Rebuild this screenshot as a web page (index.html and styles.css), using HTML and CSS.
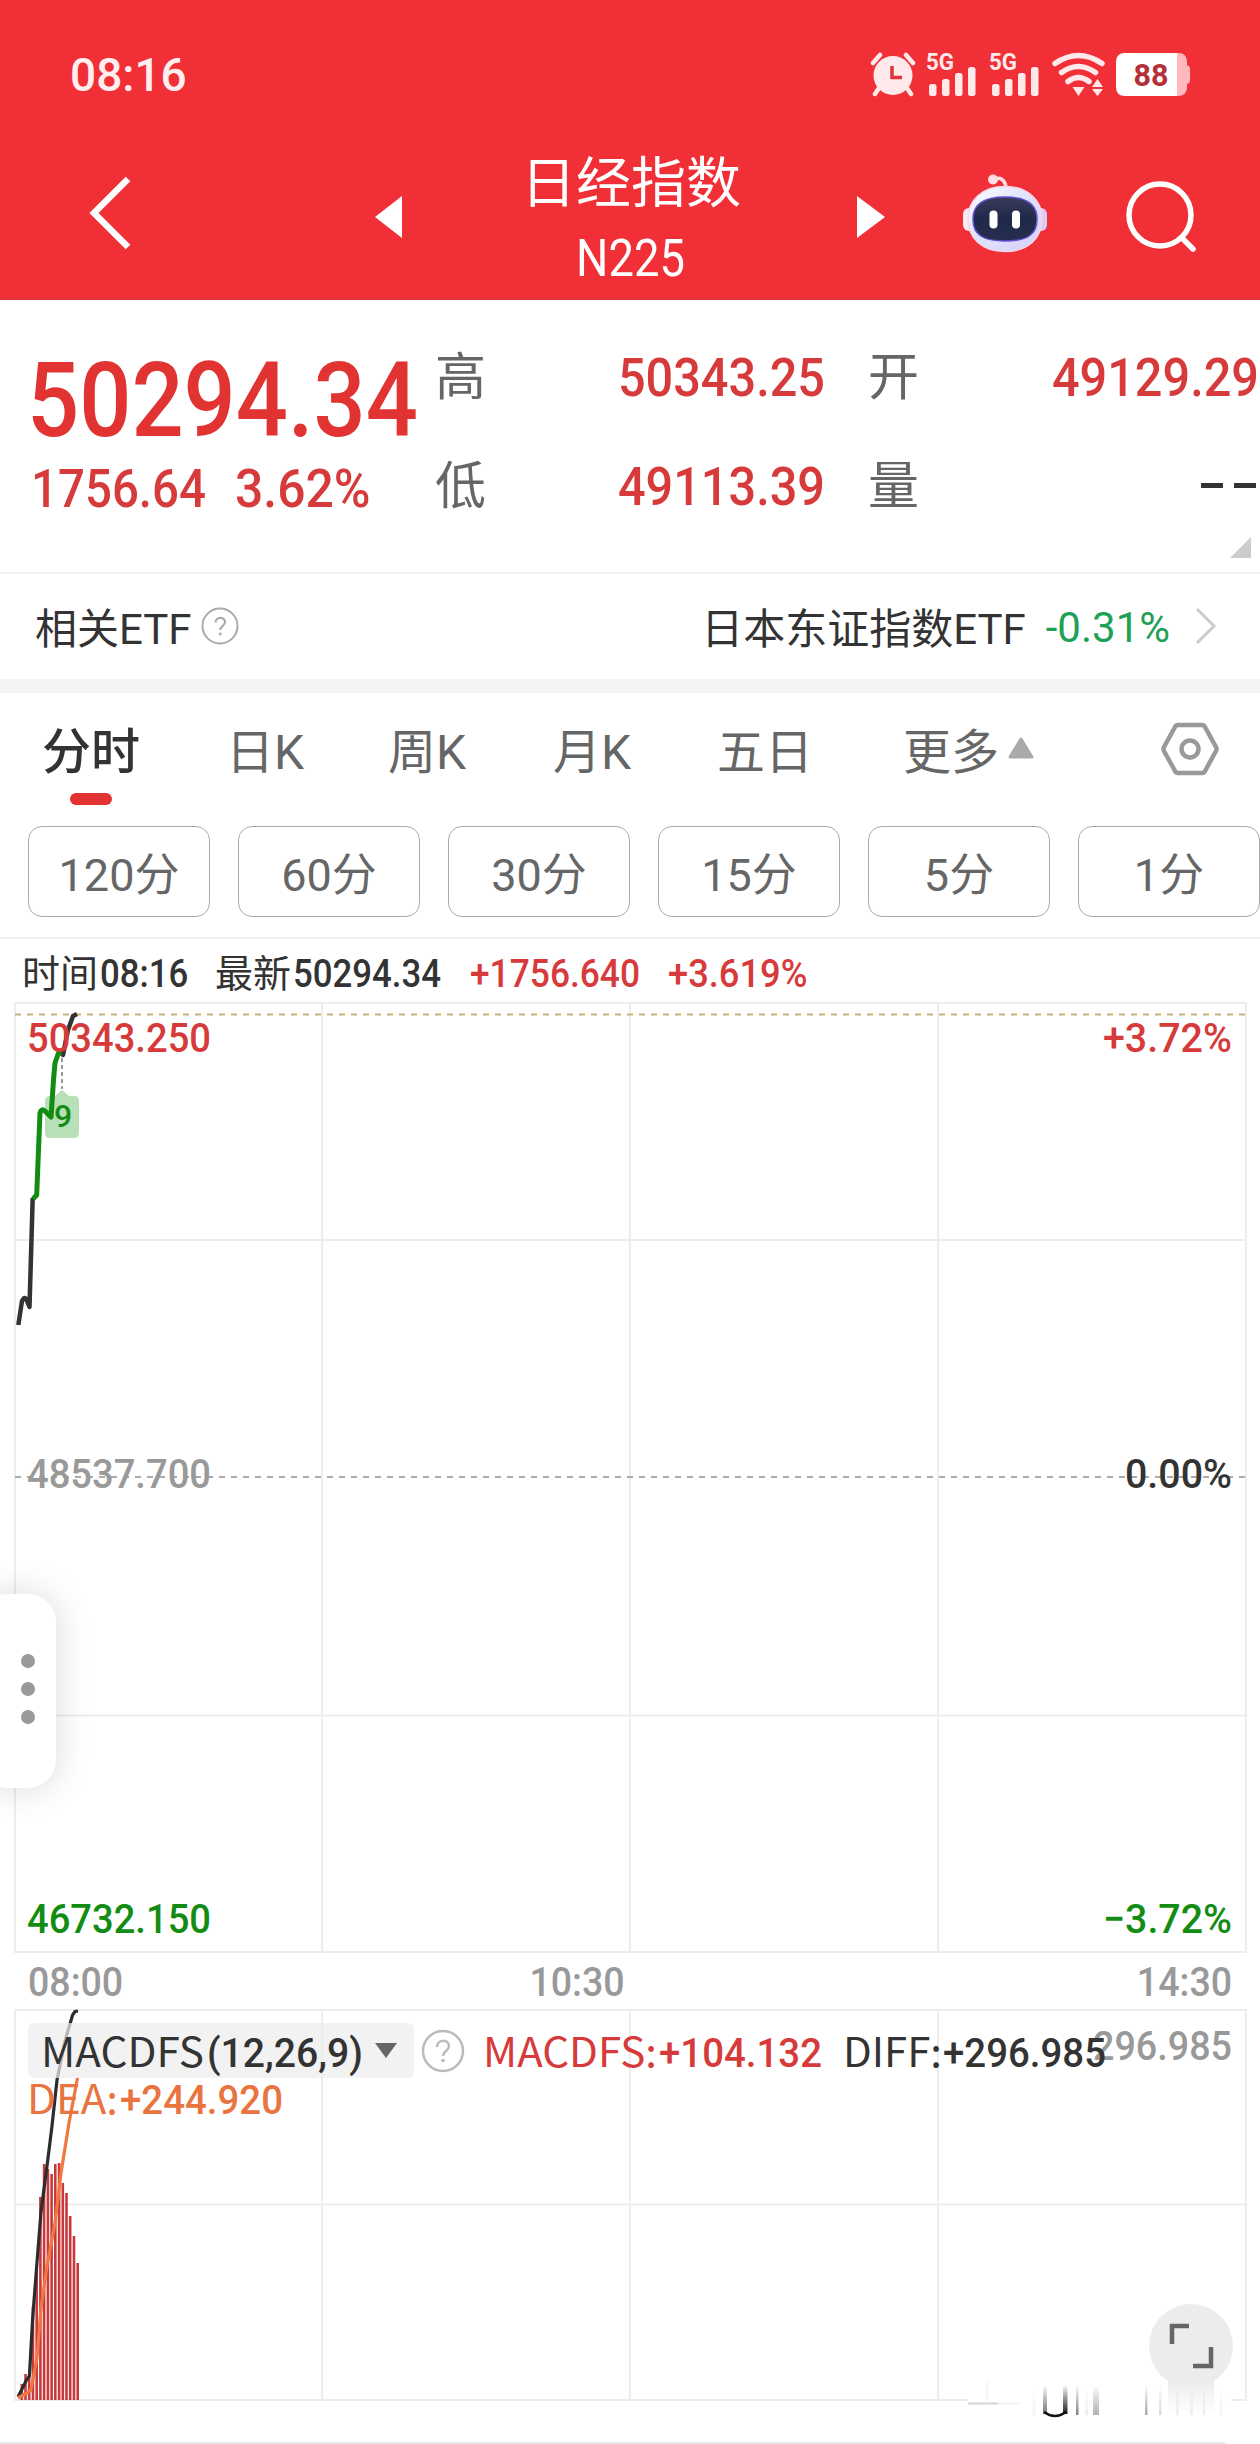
FILE: index.html
```html
<!DOCTYPE html>
<html lang="zh-CN">
<head>
<meta charset="utf-8">
<title>日经指数 N225</title>
<link rel="stylesheet" href="styles.css">
</head>
<body>
<div class="app">
  <header class="header">
    <div class="status">
      <span class="clock">08:16</span>
      <svg class="status-icons" width="322" height="48" viewBox="870 51 322 48">
        <g fill="#ffe9ea">
          <circle cx="893" cy="75.500" r="19.500"/>
          <path d="M873 63l7-8M913 63l-7-8M879 88l-4 6M907 88l4 6" stroke="#ffe9ea" stroke-width="4.500" stroke-linecap="round" fill="none"/>
          <path d="M892 66v11.500h10" stroke="#e0333a" stroke-width="3.500" fill="none"/>
          <text x="926" y="70" class="net" textLength="28" lengthAdjust="spacingAndGlyphs">5G</text>
          <text x="989" y="70" class="net" textLength="28" lengthAdjust="spacingAndGlyphs">5G</text>
          <g id="bars">
            <rect x="929" y="84" width="7.500" height="12" rx="2.500"/>
            <rect x="942" y="79" width="7.500" height="17" rx="2.500"/>
            <rect x="955" y="73" width="7.500" height="23" rx="2.500"/>
            <rect x="968" y="67" width="7.500" height="29" rx="2.500"/>
          </g>
          <use href="#bars" x="63"/>
          <path d="M1055 63.500q23.500-16 47 0M1061.500 72.500q17-12 34 0M1068 81.500q10.500-8 21 0" fill="none" stroke="#ffe9ea" stroke-width="5.500" stroke-linecap="round"/>
          <path d="M1072.500 87h12l-6 9zM1092 87l5.500-8 5.500 8zM1092 89h11l-5.500 7z"/>
        </g>
        <path d="M1176 53h2q9 0 9 9v3q3 1 3 4v11q0 3-3 4v3q0 9-9 9h-2z" fill="#ffb9bd"/>
        <path d="M1177 53h-52q-9 0-9 9v25q0 9 9 9h52z" fill="#fff"/>
        <text x="1133.500" y="86" class="battery" textLength="35" lengthAdjust="spacingAndGlyphs">88</text>
      </svg>
    </div>
    <nav class="nav">
      <svg class="back" width="44" height="80" viewBox="0 0 44 80"><path d="M39 6L5 40l34 34" fill="none" stroke="#fff" stroke-width="6.500"/></svg>
      <svg class="prev" width="27" height="42" viewBox="0 0 27 42"><path d="M27 0v42L0 21z" fill="#fff"/></svg>
      <div class="title">
        <h1>日经指数</h1>
        <span class="code">N225</span>
      </div>
      <svg class="next" width="28" height="42" viewBox="0 0 28 42"><path d="M0 0v42l28-21z" fill="#fff"/></svg>
      <svg class="robot" width="84" height="80" viewBox="963 173 84 80">
        <defs>
          <linearGradient id="shell" x1="0" y1="0" x2="1" y2="1"><stop offset="0" stop-color="#fff"/><stop offset=".45" stop-color="#dfe4fb"/><stop offset="1" stop-color="#d7cdfb"/></linearGradient>
          <linearGradient id="face" x1="0" y1="0" x2="0" y2="1"><stop offset="0" stop-color="#393c5b"/><stop offset=".5" stop-color="#20294a"/><stop offset="1" stop-color="#252e4e"/></linearGradient>
        </defs>
        <path d="M994 179q10-3 12 8" fill="none" stroke="#ffdfe7" stroke-width="3.500"/>
        <circle cx="993" cy="179.500" r="5" fill="#ffdce5"/>
        <rect x="963" y="208" width="14" height="23" rx="6" fill="#fbe9f2"/>
        <rect x="1033" y="208" width="14" height="23" rx="6" fill="#dcc8f4"/>
        <path d="M1005 186.500c23 0 37 14 37 32 0 20-14 33-37 33s-37-13-37-33c0-18 14-32 37-32z" fill="url(#shell)" stroke="#f7d5e6" stroke-width="1.500"/>
        <path d="M1005 197c21 0 32 7 32 22 0 16-10 22-32 22s-32-6-32-22c0-15 11-22 32-22z" fill="url(#face)" stroke="#6050cc" stroke-width="1.500"/>
        <rect x="989.500" y="210.500" width="8" height="18" rx="4" fill="#fff"/>
        <rect x="1012" y="210.500" width="8" height="18" rx="4" fill="#fff"/>
      </svg>
      <svg class="search" width="72" height="74" viewBox="0 0 72 74"><circle cx="34" cy="35" r="31" fill="none" stroke="#fff" stroke-width="5.500"/><path d="M56 58l11 11" stroke="#fff" stroke-width="5.500" stroke-linecap="round"/></svg>
    </nav>
  </header>

  <section class="quote">
    <div class="last">
      <div class="price"><span>50294.34</span></div>
      <div class="change"><span>1756.64</span><span>3.62%</span></div>
    </div>
    <dl class="stats">
      <dt>高</dt><dd class="up">50343.25</dd><dt>开</dt><dd class="up">49129.29</dd>
      <dt>低</dt><dd class="up">49113.39</dd><dt>量</dt><dd class="empty"><i></i><i></i></dd>
    </dl>
    <svg class="corner" width="21" height="21" viewBox="0 0 21 21"><path d="M21 0v21H0z" fill="#ccc"/></svg>
  </section>

  <section class="etf">
    <span>相关ETF</span>
    <svg class="help" width="38" height="38" viewBox="0 0 38 38"><circle cx="19" cy="19" r="17.500" fill="none" stroke="#aaa" stroke-width="2"/><path d="M14.500 15.500c0-6 9.500-6 9.500-.5 0 4-4.800 4-4.800 8" fill="none" stroke="#aaa" stroke-width="2.200"/><circle cx="19.200" cy="27" r="1.500" fill="#aaa"/></svg>
    <span class="etf-name">日本东证指数ETF</span>
    <span class="down">-0.31%</span>
    <svg class="go" width="22" height="38" viewBox="0 0 22 38"><path d="M2 2l17 17L2 36" fill="none" stroke="#ccc" stroke-width="3"/></svg>
  </section>

  <nav class="tabs">
    <span class="active">分时</span><span>日K</span><span>周K</span><span>月K</span><span>五日</span>
    <span class="more">更多<svg width="26" height="22" viewBox="0 0 26 22"><path d="M13 2l11 18H2z" fill="#aaa" stroke="#aaa" stroke-width="3" stroke-linejoin="round"/></svg></span>
    <svg class="settings" width="58" height="56" viewBox="0 0 58 56"><path d="M17 4h24q2 0 3 2l11 20q1 2 0 4L44 50q-1 2-3 2H17q-2 0-3-2L3 30q-1-2 0-4L14 6q1-2 3-2z" fill="none" stroke="#999" stroke-width="4.500"/><circle cx="29" cy="28" r="8.500" fill="none" stroke="#999" stroke-width="4.500"/></svg>
  </nav>
  <div class="periods">
    <span>120分</span><span>60分</span><span>30分</span><span>15分</span><span>5分</span><span>1分</span>
  </div>

  <div class="info">
    <span>时间<b>08:16</b></span>
    <span>最新<b>50294.34</b></span>
    <span class="up"><b>+1756.640</b></span>
    <span class="up"><b class="pct">+3.619%</b></span>
  </div>

  <svg class="chart" width="1260" height="954" viewBox="0 1000 1260 954">
    <path class="grid" d="M15 1003H1246V1952H15zM15 1240H1246M15 1715.500H1246M322 1003V1952M630 1003V1952M938 1003V1952"/>
    <path d="M15 1014.500H1245" stroke="#c3b27e" stroke-width="2" stroke-dasharray="6 6"/>
    <path d="M15 1477H1245" stroke="#aaa" stroke-width="2" stroke-dasharray="6 6"/>
    <path d="M50 1096h5l7-6 7 6h5q5 0 5 5v32q0 5-5 5H50q-5 0-5-5v-32q0-5 5-5z" fill="#b7e0b8"/>
    <path d="M62 1058v31" stroke="#555" stroke-width="1.200" stroke-dasharray="4 3"/>
    <g fill="none" stroke-width="4.500" stroke-linejoin="round">
      <path stroke="#333" d="M18.300 1325L22 1301q3-6 5 0l2.500 6L32.700 1198M60 1052l3 3 5-25 5-14 4-2"/>
      <path stroke="#128c12" stroke-width="5" d="M33 1199l3.700-4L40 1113q1-5 5-2l6 6 2.500-37L55 1063l3.500-10 3-1"/>
    </g>
    <g class="num">
      <text x="27" y="1052" textLength="184" lengthAdjust="spacingAndGlyphs" class="f-up">50343.250</text>
      <text x="1103" y="1052" textLength="129" lengthAdjust="spacingAndGlyphs" class="f-up">+3.72%</text>
      <text x="27" y="1488" textLength="184" lengthAdjust="spacingAndGlyphs" class="f-mute">48537.700</text>
      <text x="1125" y="1488" textLength="107" lengthAdjust="spacingAndGlyphs" class="f-dark">0.00%</text>
      <text x="27" y="1933" textLength="184" lengthAdjust="spacingAndGlyphs" class="f-down">46732.150</text>
      <text x="1103" y="1933" textLength="129" lengthAdjust="spacingAndGlyphs" class="f-down">−3.72%</text>
    </g>
    <text x="54" y="1127" class="mark">9</text>
  </svg>

  <div class="axis"><span>08:00</span><span>10:30</span><span>14:30</span></div>

  <svg class="chart" width="1260" height="436" viewBox="0 2008 1260 436">
    <defs>
      <linearGradient id="fade" x1="0" y1="0" x2="0" y2="1"><stop offset="0" stop-color="#000" stop-opacity="0"/><stop offset="1" stop-color="#000"/></linearGradient>
      <linearGradient id="melt" x1="0" y1="0" x2="0" y2="1"><stop offset="0" stop-color="#ececec"/><stop offset="1" stop-color="#ececec" stop-opacity="0"/></linearGradient>
    </defs>
    <path class="grid" d="M15 2010H1246V2400H15zM15 2204.500H1246M322 2010V2400M630 2010V2400M938 2010V2400"/>
    <path class="bars" d="M21.800 2400V2384M25.500 2400V2374M29.200 2400V2376M33 2400V2306M36.700 2400V2267M40.400 2400V2197M44.100 2400V2164M47.900 2400V2169M51.600 2400V2174M55.300 2400V2164M59.100 2400V2163M62.800 2400V2183M66.500 2400V2193M70.200 2400V2216M74 2400V2236M77.700 2400V2263"/>
    <path d="M18 2397L26.500 2380 29.400 2376 32.600 2319 36.700 2266 41 2212 47 2166 52 2126 57 2080 65 2041 72.600 2015 75 2011.500 78 2011" fill="none" stroke="#2c2c2e" stroke-width="3.200"/>
    <rect x="28" y="2023" width="386" height="55" rx="6" fill="#ededed" fill-opacity=".72"/>
    <path d="M18 2398L30.600 2391 37 2358 41 2308 47 2266 55 2223 61 2173 69 2123 77.500 2078" fill="none" stroke="#f17640" stroke-width="3.200"/>
    <text class="word f-dark" x="41" y="2067" textLength="163" lengthAdjust="spacingAndGlyphs">MACDFS</text>
    <g class="num">
      <text x="207" y="2067" textLength="156" lengthAdjust="spacingAndGlyphs" class="f-dark">(12,26,9)</text>
      <text x="659" y="2067" textLength="163" lengthAdjust="spacingAndGlyphs" class="f-up">+104.132</text>
      <text x="1093" y="2060" textLength="139" lengthAdjust="spacingAndGlyphs" class="f-mute">296.985</text>
      <text x="943" y="2067" textLength="163" lengthAdjust="spacingAndGlyphs" class="f-dark">+296.985</text>
      <text x="120" y="2114" textLength="163" lengthAdjust="spacingAndGlyphs" class="f-dea">+244.920</text>
    </g>
    <path d="M375 2043h22l-11 15z" fill="#666"/>
    <circle cx="443" cy="2051" r="20" fill="none" stroke="#bbb" stroke-width="2.500"/>
    <path d="M437 2047c0-8 12-8 12-1 0 5-6 5-6 10" fill="none" stroke="#bbb" stroke-width="2.500"/><circle cx="443" cy="2060.500" r="1.800" fill="#bbb"/>
    <text class="word f-up" x="483" y="2067" textLength="174" lengthAdjust="spacingAndGlyphs">MACDFS:</text>
    <text class="word f-dark" x="843" y="2067" textLength="99" lengthAdjust="spacingAndGlyphs">DIFF:</text>
    <text class="word f-dea" x="27" y="2114" textLength="91" lengthAdjust="spacingAndGlyphs">DEA:</text>
    <circle cx="1191" cy="2346" r="42" fill="#ececec"/>
    <path d="M1172 2344v-18h17M1211 2347v19h-18" fill="none" stroke="#666" stroke-width="4.500"/>
    <rect x="968" y="2383" width="263" height="33" fill="#fff"/>
    <rect x="1168" y="2380" width="46" height="34" fill="url(#melt)"/>
    <g fill="url(#fade)">
      <rect x="1043" y="2385" width="4" height="29" opacity=".55"/>
      <rect x="1063" y="2385" width="4.500" height="29" opacity=".9"/>
      <rect x="1076" y="2385" width="2.500" height="30" opacity=".5"/>
      <rect x="1093" y="2385" width="6" height="30" opacity=".3"/>
      <rect x="1145" y="2385" width="2.500" height="30" opacity=".35"/>
      <rect x="1159" y="2385" width="2.500" height="30" opacity=".15"/>
      <rect x="1203" y="2385" width="2" height="30" opacity=".08"/>
      <rect x="1085" y="2385" width="3" height="30" opacity=".06"/>
      <rect x="1032" y="2385" width="4" height="30" opacity=".04"/>
      <rect x="1176" y="2385" width="3" height="30" opacity=".06"/>
      <rect x="1190" y="2385" width="3" height="30" opacity=".06"/>
      <rect x="1220" y="2385" width="2" height="30" opacity=".05"/>
    </g>
    <path d="M1044 2412q11 8 22 0" fill="none" stroke="#111" stroke-width="2.500"/>
    <path d="M968 2403.500h30" stroke="#d4d4d4" stroke-width="2"/><path d="M998 2403.500h22" stroke="#f0f0f0" stroke-width="2"/>
    <path d="M987 2380v22" stroke="#f8f8f8" stroke-width="3"/>
    <path d="M0 2443h1225" stroke="#e7e8ec" stroke-width="2"/>
  </svg>

  <div class="drawer"><i></i><i></i><i></i></div>
</div>
</body>
</html>
```
FILE: styles.css
```css
* { box-sizing: border-box; }
body {
  margin: 0;
  background: #fff;
  font-family: Roboto, "Noto Sans CJK SC", sans-serif;
  color: #333;
}
.app {
  position: relative;
  width: 1260px;
  height: 2444px;
  overflow: hidden;
}
h1, dl, dd { margin: 0; font-weight: 400; }
svg { display: block; flex: none; }
.up { color: #d63a3a; }

/* header */
.header {
  height: 300px;
  background: #f12f36;
  border-bottom: 2px solid #e03339;
  color: #fff;
}
.status {
  display: flex;
  justify-content: space-between;
  height: 150px;
  padding: 51px 68px 0 70px;
}
.clock { font-size: 46px; font-weight: 500; line-height: 48px; color: #ffeff0; }
.net { font-size: 23px; font-weight: 700; }
.battery { font-size: 31px; font-weight: 700; fill: #b52f36; }
.nav { display: flex; align-items: flex-start; height: 148px; padding-left: 89px; }
.back { margin-top: 23px; }
.prev { margin: 46px 0 0 242px; }
.title { width: 455px; text-align: center; }
.title h1 { margin-left: 3px; font-size: 55px; line-height: 66px; }
.code {
  display: block;
  margin: 9px 0 0 2px;
  font-size: 51px;
  line-height: 68px;
  transform: scaleX(.89);
}
.next { margin-top: 46px; }
.robot { margin: 23px 0 0 78px; }
.search { margin: 30px 0 0 79px; }

/* quote */
.quote {
  position: relative;
  display: flex;
  height: 274px;
  padding-left: 32px;
  border-bottom: 2px solid #f2f2f2;
}
.last { width: 403px; padding-top: 51px; color: #e23333; font-weight: 500; }
.last span { display: inline-block; transform-origin: left; }
.price { height: 108px; font-size: 104px; line-height: 100px; }
.price span { transform: scaleX(.883); margin-left: -5px; }
.change { display: grid; grid-template-columns: 204px 1fr; font-size: 53px; line-height: 60px; color: #d63a3a; }
.change span { transform: scaleX(.895); margin-left: -1px; }
.change span + span { transform: scaleX(.94); }
.stats {
  display: grid;
  grid-template-columns: 50px 340px 96px 338px;
  grid-auto-rows: 60px;
  row-gap: 49px;
  padding-top: 48px;
  font-size: 53px;
  line-height: 60px;
}
.stats dt { color: #666; font-size: 51px; }
.stats dt:nth-of-type(even) { padding-left: 43px; }
.stats dd { text-align: right; font-weight: 500; transform: scaleX(.918); transform-origin: right; }
.stats .empty { display: flex; justify-content: flex-end; align-items: center; gap: 11px; padding-right: 3px; transform: none; }
.empty i { width: 22px; height: 5px; margin-top: -4px; background: #333; }
.corner { position: absolute; right: 9px; bottom: 14px; }

/* related fund */
.etf {
  display: flex;
  align-items: center;
  height: 119px;
  padding: 0 43px 2px 35px;
  border-bottom: 14px solid #f4f4f4;
  font-size: 42px;
}
.help { margin-left: 9px; }
.etf-name { margin-left: auto; }
.down { margin: 3px 0 0 20px; color: #1fa057; }
.go { margin-left: 25px; }

/* tabs */
.tabs {
  display: grid;
  grid-template-columns: 184px 162px 165px 164px 186px 258px 60px;
  height: 133px;
  padding: 30px 0 0 42px;
  font-size: 48px;
  line-height: 60px;
  color: #666;
}
.active { color: #333; font-weight: 500; font-size: 49px; }
.active::after {
  content: "";
  display: block;
  width: 42px;
  height: 12px;
  margin: 10px 0 0 28px;
  border-radius: 6px;
  background: #e33232;
}
.more { display: flex; }
.more svg { margin: 14px 0 0 9px; }
.settings { margin-top: -2px; }
.periods {
  display: flex;
  gap: 28px;
  height: 113px;
  padding-left: 28px;
  border-bottom: 2px solid #f0f0f0;
}
.periods span {
  flex: 0 0 182px;
  height: 91px;
  border: 1.500px solid #aaa;
  border-radius: 14px;
  font-size: 45px;
  line-height: 98px;
  text-align: center;
  color: #666;
}

/* intraday line */
.info {
  display: grid;
  grid-template-columns: 193px 255px 198px 1fr;
  height: 61px;
  padding: 5px 0 0 22px;
  font-size: 38px;
  line-height: 60px;
}
.info b { display: inline-block; margin-left: 2px; font-weight: 500; transform: scaleX(.915); transform-origin: left; }
.info .up b { margin-left: 0; transform: scaleX(.93); }
.info .up .pct { transform: scaleX(.955); }
.grid { fill: none; stroke: #ededed; stroke-width: 2px; }
.num { font-size: 41px; font-weight: 500; }
.word { font-size: 41px; font-family: "Noto Sans CJK SC", sans-serif; }
.mark { font-size: 32px; font-weight: 500; fill: #128c12; }
.f-up { fill: #d63a3a; }
.f-down { fill: #128c12; }
.f-mute { fill: #999; }
.f-dark { fill: #333; }
.f-dea { fill: #e9743f; }
.bars { fill: none; stroke: #c9393c; stroke-width: 2.600px; }
.axis {
  display: flex;
  justify-content: space-between;
  height: 54px;
  padding: 0 28px;
  font-size: 41px;
  font-weight: 500;
  line-height: 56px;
  color: #999;
}
.axis span { transform: scaleX(.915); transform-origin: left; }
.axis span:nth-child(2) { margin-right: 106px; transform-origin: center; }
.axis span:last-child { transform-origin: right; }

.drawer {
  position: absolute;
  left: -20px;
  top: 1594px;
  width: 76px;
  height: 194px;
  border-radius: 28px;
  background: #fff;
  box-shadow: 0 0 36px rgba(0, 0, 0, .15);
  display: flex;
  flex-direction: column;
  align-items: center;
  justify-content: center;
  gap: 14px;
  padding: 0 0 4px 20px;
}
.drawer i { width: 14px; height: 14px; border-radius: 50%; background: #999; }
```
